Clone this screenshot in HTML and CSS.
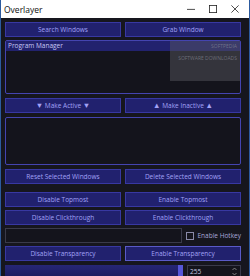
FILE: index.html
```html
<!DOCTYPE html>
<html lang="en">
<head>
    <meta charset="UTF-8">
    <title>Overlayer</title>
    <link rel="stylesheet" href="styles.css">
</head>
<body>
    <div class="window">
        <div class="titlebar">
            <span class="title">Overlayer</span>
            <div class="controls">
                <svg width="10" height="10" viewBox="0 0 10 10"><path d="M0 5.5h10" stroke="#222" stroke-width="1"/></svg>
                <svg width="10" height="10" viewBox="0 0 10 10"><rect x="0.5" y="0.5" width="9" height="9" fill="none" stroke="#222" stroke-width="1"/></svg>
                <svg width="10" height="10" viewBox="0 0 10 10"><path d="M0.5 0.5l9 9M9.5 0.5l-9 9" stroke="#222" stroke-width="1"/></svg>
            </div>
        </div>

        <div class="content">
            <div class="row first">
                <button class="btn">Search Windows</button>
                <button class="btn">Grab Window</button>
            </div>

            <div class="listbox top-list">
                <div class="item selected">Program Manager</div>
                <div class="watermark">
                    <span>SOFTPEDIA</span>
                    <span>SOFTWARE DOWNLOADS</span>
                </div>
            </div>

            <div class="row">
                <button class="btn"><span class="tri">&#9660;</span> Make Active <span class="tri">&#9660;</span></button>
                <button class="btn"><span class="tri">&#9650;</span> Make Inactive <span class="tri">&#9650;</span></button>
            </div>

            <div class="listbox bottom-list"></div>

            <div class="row">
                <button class="btn">Reset Selected Windows</button>
                <button class="btn">Delete Selected Windows</button>
            </div>

            <div class="row spaced">
                <button class="btn">Disable Topmost</button>
                <button class="btn">Enable Topmost</button>
            </div>

            <div class="row tight">
                <button class="btn">Disable Clickthrough</button>
                <button class="btn">Enable Clickthrough</button>
            </div>

            <div class="hotkey-row">
                <div class="textbox"></div>
                <label class="check"><span class="box"></span>Enable Hotkey</label>
            </div>

            <div class="row tight">
                <button class="btn">Disable Transparency</button>
                <button class="btn focused">Enable Transparency</button>
            </div>

            <div class="slider-row">
                <div class="slider">
                    <div class="thumb"></div>
                </div>
                <div class="spin">
                    <span>255</span>
                    <div class="arrows">
                        <svg width="5" height="9" viewBox="0 0 5 9"><path d="M0.5 3l2-2 2 2M0.5 6l2 2 2-2" fill="none" stroke="#999" stroke-width="0.8"/></svg>
                    </div>
                </div>
            </div>
        </div>
    </div>
</body>
</html>
```

FILE: styles.css
```css
body {
    margin: 0;
    background: #16161e;
    font-family: "Open Sans", "Noto Sans", sans-serif;
}

.window {
    width: 250px;
    height: 276px;
    overflow: hidden;
    background: #16161e;
    box-sizing: border-box;
    border-left: 1px solid #2c5a9e;
    border-right: 1px solid #2c5a9e;
}

.titlebar {
    height: 18px;
    background: #ffffff;
    display: flex;
    align-items: center;
    justify-content: space-between;
    padding: 0 10px 0 3px;
}

.title {
    font-size: 8.5px;
    color: #111;
}

.controls {
    display: flex;
    gap: 14px;
    align-items: center;
}

.controls svg {
    width: 8px;
    height: 8px;
}

.content {
    padding: 0 0 0 4px;
    width: 236px;
    display: flex;
    flex-direction: column;
}

.row {
    display: flex;
    gap: 4px;
    margin-top: 4px;
}

.row.first {
    margin-top: 4px;
}

.row.spaced {
    margin-top: 8px;
}

.row.tight {
    margin-top: 3px;
}

.btn {
    flex: 1;
    height: 15px;
    padding: 0;
    margin: 0;
    background: #21216e;
    border: 1px solid #3838a2;
    color: #a2a2f6;
    font-family: "Open Sans", "Noto Sans", sans-serif;
    font-size: 6.5px;
    line-height: 13px;
}

.btn .tri {
    font-size: 7.5px;
}

.btn.focused {
    border-color: #5a5ac8;
}

.listbox {
    position: relative;
    background: #14141c;
    border: 1px solid #4444b0;
    border-radius: 2px;
    box-sizing: border-box;
}

.top-list {
    height: 54px;
    margin-top: 3px;
}

.bottom-list {
    height: 48px;
    margin-top: 4px;
}

.item {
    height: 10px;
    padding-left: 2px;
    font-size: 6.5px;
    line-height: 10px;
    color: #c8c8f4;
}

.item.selected {
    background: #22226e;
}

.watermark {
    position: absolute;
    top: 0;
    right: 0;
    width: 70px;
    height: 40px;
    background: rgba(90, 90, 100, 0.45);
    display: flex;
    flex-direction: column;
    align-items: flex-end;
    padding: 2px 3px 0 0;
    box-sizing: border-box;
    font-size: 5px;
    color: rgba(150, 150, 160, 0.6);
    gap: 6px;
}

.hotkey-row {
    display: flex;
    align-items: center;
    margin-top: 3px;
    height: 15px;
}

.textbox {
    width: 182px;
    height: 15px;
    box-sizing: border-box;
    background: #14141c;
    border: 1px solid #3a3a4a;
}

.check {
    display: flex;
    align-items: center;
    margin-left: 4px;
    font-size: 6.5px;
    color: #a8a8d8;
    white-space: nowrap;
}

.box {
    width: 6px;
    height: 6px;
    border: 1px solid #8a8aa8;
    margin-right: 3px;
}

.slider-row {
    display: flex;
    margin-top: 4px;
    gap: 4px;
    height: 13px;
}

.slider {
    position: relative;
    width: 178px;
    height: 13px;
    background: linear-gradient(#262676, #1c1c5c);
}

.thumb {
    position: absolute;
    right: 0;
    top: 0;
    width: 5px;
    height: 11px;
    background: #5656d8;
}

.spin {
    flex: 1;
    box-sizing: border-box;
    height: 13px;
    background: #14141c;
    border: 1px solid #3a3a4a;
    display: flex;
    align-items: center;
    justify-content: space-between;
    padding: 0 3px 0 2px;
    font-size: 6.5px;
    color: #c8c8e0;
}

.arrows {
    display: flex;
}
```
